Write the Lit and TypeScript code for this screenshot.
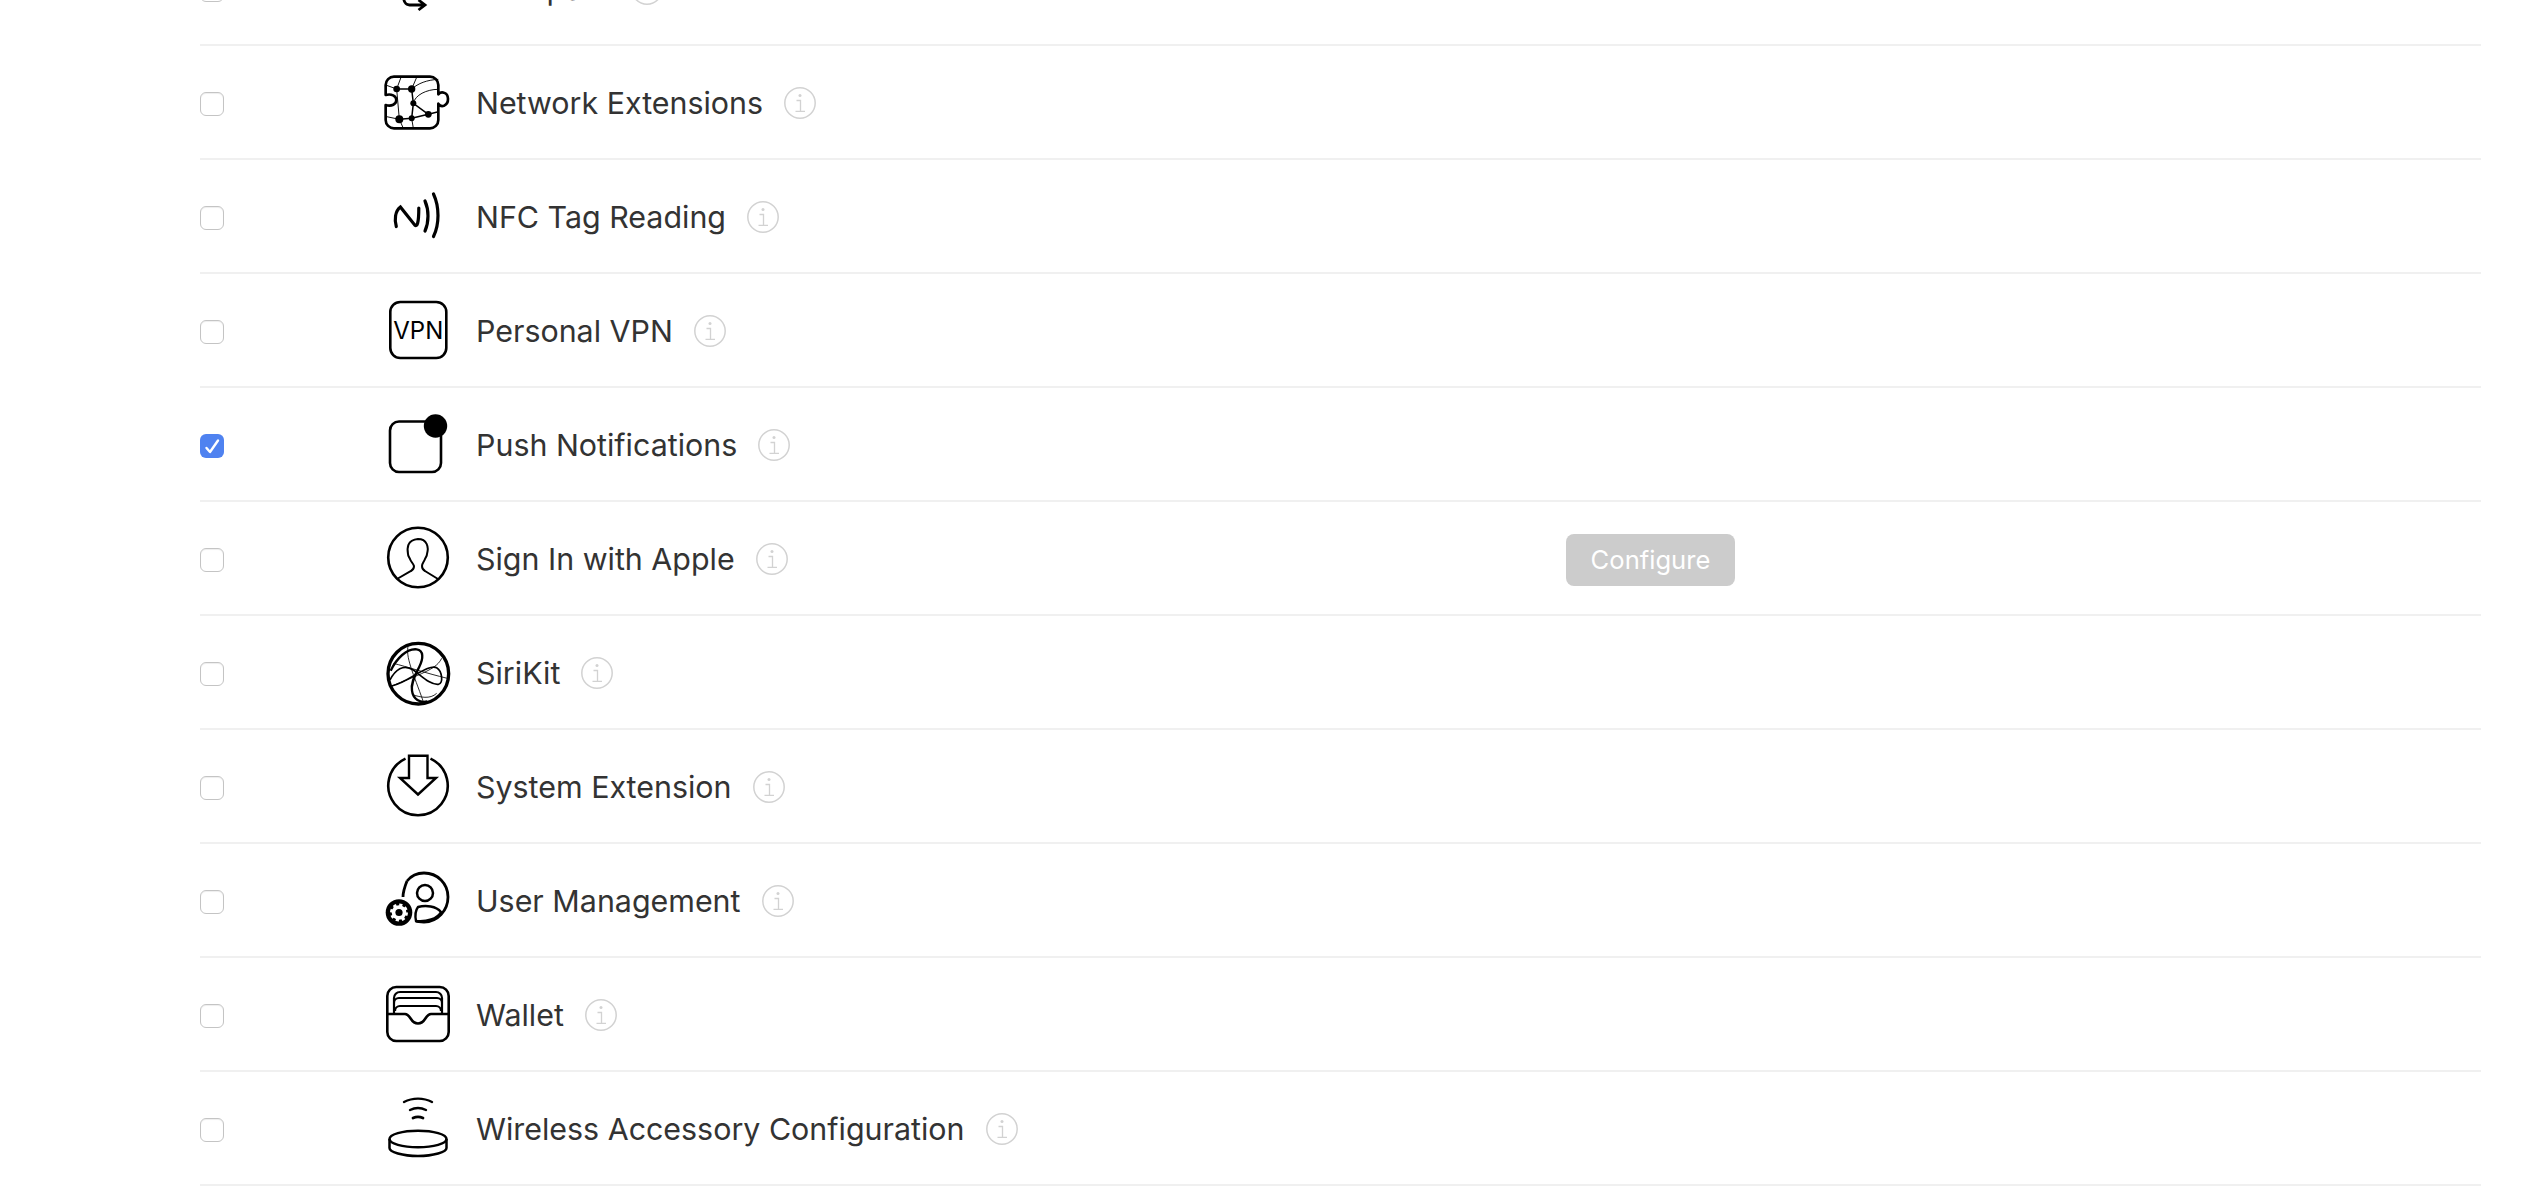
import { LitElement, html, css, svg } from "lit";
import { customElement } from "lit/decorators.js";

const icons: Record<string, any> = {
  multipath: svg`<path d="M23.500 46c0 5 2 9 6 9h15M38.500 50l6.500 5-6.500 5" fill="none" stroke="#000" stroke-width="2.800"/>`,
  network: svg`<g transform="translate(-10 -4) scale(.3333)" fill="none" stroke="#000">
    <path stroke-width="8" stroke-linejoin="round" d="M72 50H180a25 25 0 0 1 25 25V103c5-6 11-7 17-5c15 4 17 32 0 39c-8 3-13 0-17-6V180a25 25 0 0 1-25 25H72a25 25 0 0 1-25-25V135c18 6 32-3 32-15s-15-20-32-15V75a25 25 0 0 1 25-25z"/>
    <path stroke-width="2.800" d="M93 52L80 87M125 87L140 52M125 87C145 70 170 60 205 58M205 88C170 88 135 105 130 130M80 87L88 178M50 170L88 178M88 178L100 205M125 175L130 205M47 75L80 87"/>
    <path stroke-width="4.500" d="M80 87H125L130 130L175 163M130 130L125 175M88 178L125 175L175 163L205 155"/>
    <g fill="#000" stroke="none"><circle cx="80" cy="87" r="10"/><circle cx="125" cy="87" r="11"/><circle cx="130" cy="130" r="9"/><circle cx="175" cy="163" r="10"/><circle cx="125" cy="175" r="9"/><circle cx="88" cy="178" r="12"/></g>
  </g>`,
  nfc: svg`<g fill="none" stroke="#000" stroke-linecap="round" stroke-width="3.200"><path d="M16.300 48.500C14.300 42 15 33 20.400 29L34.700 47C37 49 38.800 46 38.800 30"/><path d="M45 23c4 9 4 21 0 30"/><path d="M53.500 16c6 13 6 30 0 42.500"/></g>`,
  vpn: svg`<rect x="10.300" y="10" width="56" height="56" rx="10" fill="none" stroke="#000" stroke-width="2.600"/><text class="vpn" x="38.300" y="46.500">VPN</text>`,
  push: svg`<path d="M46 15.500H19a9 9 0 0 0-9 9V57a9 9 0 0 0 9 9h33a9 9 0 0 0 9-9V29" fill="none" stroke="#000" stroke-width="2.600"/><circle cx="55.500" cy="20" r="11.700"/>`,
  sign: svg`<circle cx="38" cy="37.500" r="29.800" fill="none" stroke="#000" stroke-width="2.600"/><path d="M17 59l14-8c2-1 3-3 3-5-1-3-3-4-4-7-1-2-2-3-2-5-1-6-1-14 10-15 9 0 11 8 9 15 0 2-1 3-2 5-1 3-3 4-3 7 0 2 1 4 3 5l13 8" fill="none" stroke="#000" stroke-width="2"/>`,
  siri: svg`<g transform="translate(-10 -4) scale(.3333)" fill="none" stroke="#000">
    <circle cx="145" cy="131" r="91" stroke-width="10"/>
    <path stroke-width="7" d="M62 122C80 85 110 55 140 58c22 3 20 28 8 52-10 22-26 45-22 72 3 26 25 38 46 32"/>
    <path stroke-width="5" d="M60 150C75 120 100 100 130 120c25 18 50 45 75 43 16-1 12-40-5-50-15-7-40 8-70 25-20 12-45 25-65 30"/>
    <path stroke-width="2.500" d="M115 45C105 80 130 130 160 215M215 85C200 115 170 125 66 168M70 100C110 110 170 130 232 145M130 195c20 6 50 14 70-5"/>
  </g>`,
  system: svg`<path d="M25.500 10.600A29.700 29.700 0 1 0 50.500 10.600" fill="none" stroke="#000" stroke-width="2.600"/><path d="M29 7.800h18.500V30H56L38 46.500 20 30h9z" fill="#fff" stroke="#000" stroke-width="2.400"/>`,
  user: svg`<path d="M27 19c4-5 10-8 17-8 13.500 0 24 10.500 24 24s-10.500 25-24 25c-3 0-6 0-8-1" fill="none" stroke="#000" stroke-width="2.800"/><path d="M23 35c0-5 2-11 4-16" fill="none" stroke="#000" stroke-width="2.800"/>
    <circle cx="45" cy="31" r="8" fill="none" stroke="#000" stroke-width="2.500"/>
    <path d="M36 59c-1-5-1-10 2-14 8-2 18-1 23 5-4 7-14 10-25 9z" fill="none" stroke="#000" stroke-width="2.400"/>
    <circle cx="19" cy="50.500" r="13.300"/><circle cx="19" cy="50.500" r="7.300" fill="#fff" stroke="#fff" stroke-width="3.400" stroke-dasharray="3 2.730"/><circle cx="19" cy="50.500" r="3.600"/>`,
  wallet: svg`<rect x="7.300" y="11" width="61.400" height="54" rx="9" fill="none" stroke="#000" stroke-width="2.600"/>
    <path d="M14 37V22a6 6 0 0 1 6-6h36a6 6 0 0 1 6 6v15M14 27a5 5 0 0 1 5-5h38a5 5 0 0 1 5 5M15 35a5 5 0 0 1 5-5h36a5 5 0 0 1 5 5" fill="none" stroke="#000" stroke-width="2.200"/>
    <path d="M7.300 38H25c6 0 5 9.500 13 9.500S45 38 51 38H68.700" fill="none" stroke="#000" stroke-width="2.600"/>`,
  wireless: svg`<g fill="none" stroke="#000" stroke-linecap="round"><path stroke-width="2.400" d="M24 12c8.500-4.500 19.500-4.500 28 0M30 20c5-2.500 11-2.500 16 0"/><path stroke-width="2.800" d="M33 28c3-1.300 7-1.300 10 0"/></g>
    <ellipse cx="38" cy="49" rx="28.500" ry="8.300" fill="none" stroke="#000" stroke-width="2.500"/><path d="M9.500 49v9c0 4 13 8 28.500 8s28.500-4 28.500-8v-9" fill="none" stroke="#000" stroke-width="2.500"/>`,
};

const rows: { key: string; label: string; checked?: boolean; configure?: boolean }[] = [
  { key: "multipath", label: "Multipath" },
  { key: "network", label: "Network Extensions" },
  { key: "nfc", label: "NFC Tag Reading" },
  { key: "vpn", label: "Personal VPN" },
  { key: "push", label: "Push Notifications", checked: true },
  { key: "sign", label: "Sign In with Apple", configure: true },
  { key: "siri", label: "SiriKit" },
  { key: "system", label: "System Extension" },
  { key: "user", label: "User Management" },
  { key: "wallet", label: "Wallet" },
  { key: "wireless", label: "Wireless Accessory Configuration" },
];

@customElement("app-root")
export class AppRoot extends LitElement {
  static styles = css`
    :host { display: block; height: 1196px; overflow: hidden; background: #fff; font-family: Inter, "Liberation Sans", sans-serif; }
    .list { margin: -68px 65px 0 200px; }
    .row { display: grid; grid-template-columns: 180px 96px 1090px auto; align-items: center; height: 112px; border-bottom: 2px solid #f0f0f0; }
    .check { width: 24px; height: 24px; margin-top: 3px; box-sizing: border-box; border: 1.5px solid #c4c4c4; border-radius: 6px; background: #fff; display: flex; box-shadow: inset 0 1px 1px #eee; }
    .check.on { background: #4f82f0; border: none; box-shadow: none; }
    .check svg { width: 100%; height: 100%; }
    .icon { display: block; width: 76px; height: 76px; }
    .vpn { font-size: 24px; font-weight: 400; text-anchor: middle; font-family: Inter, "Liberation Sans", sans-serif; }
    .name { display: flex; align-items: center; gap: 21px; padding-top: 2px; color: #333; }
    .text { font-size: 30.4px; line-height: 36px; white-space: nowrap; }
    .info { flex: none; width: 32px; height: 32px; display: block; }
    .btn { width: 169px; height: 52px; margin-top: 3px; border: none; border-radius: 8px; padding: 0; background: #ccc; color: #fff; font: 400 25.6px Inter, "Liberation Sans", sans-serif; }
  `;

  render() {
    return html`<div class="list">
      ${rows.map(
        (r) => html`<div class="row">
          <span class="check ${r.checked ? "on" : ""}">
            ${r.checked
              ? html`<svg viewBox="0 0 24 24"><path d="M6.500 14l3.500 4 8-11.500" fill="none" stroke="#fff" stroke-width="2.400" stroke-linecap="round" stroke-linejoin="round"/></svg>`
              : ""}
          </span>
          <svg class="icon" viewBox="0 0 76 76">${icons[r.key]}</svg>
          <div class="name">
            <span class="text">${r.label}</span>
            <svg class="info" viewBox="0 0 32 32">
              <circle cx="16" cy="16" r="15.200" fill="none" stroke="#d2d2d2" stroke-width="1.500"/>
              <path d="M12.500 13.500h4v10.500M11.500 24.300h9.500" fill="none" stroke="#d2d2d2" stroke-width="1.300"/>
              <circle cx="16" cy="8.500" r="1.500" fill="#d2d2d2"/>
            </svg>
          </div>
          ${r.configure ? html`<button class="btn">Configure</button>` : ""}
        </div>`
      )}
    </div>`;
  }
}
